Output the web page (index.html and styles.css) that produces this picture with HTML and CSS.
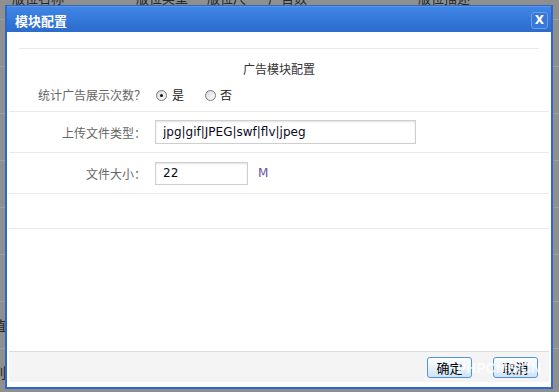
FILE: index.html
```html
<!DOCTYPE html>
<html lang="zh-CN">
<head>
    <meta charset="UTF-8">
    <title>模块配置</title>
    <link rel="stylesheet" href="styles.css">
</head>
<body>
    <div class="page">
        <div class="grid-head">
            <span>版位名称</span>
            <span>版位类型</span>
            <span>版位尺寸</span>
            <span>广告数</span>
            <span>版位描述</span>
        </div>
        <div class="grid-row"></div>
        <div class="grid-row"></div>
        <div class="grid-row"></div>
        <div class="grid-row"></div>
        <div class="grid-row"></div>
        <div class="grid-row"></div>
        <div class="grid-row">值</div>
        <div class="grid-row">列</div>
    </div>

    <div class="dialog">
        <div class="dialog-title">
            <span>模块配置</span>
            <a class="dialog-close">X</a>
        </div>
        <div class="dialog-body">
            <div class="form-panel">
                <div class="form-top">
                    <div class="form-caption">广告模块配置</div>
                    <div class="form-row-inline">
                        <label class="form-label">统计广告展示次数？</label>
                        <div class="field radios">
                            <span class="radio checked"></span><span class="radio-text">是</span>
                            <span class="radio"></span><span class="radio-text">否</span>
                        </div>
                    </div>
                </div>
                <div class="form-row">
                    <label class="form-label">上传文件类型：</label>
                    <div class="field">
                        <input type="text" class="input-text input-wide" value="jpg|gif|JPEG|swf|flv|jpeg">
                    </div>
                </div>
                <div class="form-row">
                    <label class="form-label">文件大小：</label>
                    <div class="field">
                        <input type="text" class="input-text input-small" value="22">
                        <span class="unit">M</span>
                    </div>
                </div>
                <div class="form-row form-row-empty"></div>
            </div>
            <div class="dialog-footer">
                <button type="button" class="btn">确定</button>
                <button type="button" class="btn">取消</button>
            </div>
        </div>
        <div class="watermark">PHPCMS.CN</div>
    </div>
</body>
</html>
```

FILE: styles.css
```css
body {
    margin: 0;
    background-color: #8f8f8f;
    font-family: "Noto Sans CJK SC", "DejaVu Sans", sans-serif;
    font-size: 12px;
    overflow: hidden;
    height: 392px;
}

/* page behind the mask */
.page {
    color: #262626;
}

.grid-head {
    display: grid;
    grid-template-columns: 124px 71px 61px 150px 1fr;
    height: 28px;
    margin-top: -9px;
    border-bottom: 1px solid #9e9e9e;
    font-size: 13px;
    line-height: 14px;
}

.grid-head span {
    padding-left: 12px;
}

.grid-row {
    height: 46px;
    border-bottom: 1px solid #9e9e9e;
    font-size: 14px;
    line-height: 46px;
    text-indent: -8px;
}

/* dialog */
.dialog {
    position: absolute;
    left: 5px;
    top: 5px;
    width: 544px;
    height: 380px;
    border: 2px solid #2e67c6;
    background-color: #fff;
    display: flex;
    flex-direction: column;
}

.dialog-title {
    height: 24px;
    margin-top: -1px;
    padding: 1px 3px 0 8px;
    background: linear-gradient(#3f86e6, #2b6bcd);
    border-top: 1px solid #5a95e8;
    display: flex;
    align-items: center;
    justify-content: space-between;
    color: #fff;
    font-size: 13px;
    font-weight: 700;
}

.dialog-close {
    width: 15px;
    height: 15px;
    border: 1px solid #6c9de8;
    border-radius: 3px;
    background-color: #3a78d8;
    color: #fff;
    font-family: "DejaVu Sans", sans-serif;
    font-size: 12px;
    font-weight: 700;
    line-height: 15px;
    text-align: center;
}

.dialog-body {
    flex: 1;
    padding: 16px 2px 5px;
    display: flex;
    flex-direction: column;
}

.form-panel {
    flex: 1;
}

.form-top {
    border-bottom: 1px solid #e9e9e9;
}

.form-caption {
    margin: 0 10px;
    padding-top: 12px;
    border-top: 1px solid #e9e9e9;
    line-height: 16px;
    text-align: center;
    color: #333;
}

.form-row-inline {
    display: flex;
    padding: 10px 0 8px;
    line-height: 16px;
}

.form-row {
    display: flex;
    align-items: center;
    height: 40px;
    border-bottom: 1px solid #e9e9e9;
}

.form-row-empty {
    height: 34px;
}

.form-label {
    width: 137px;
    text-align: right;
    color: #666;
}

.field {
    margin-left: 9px;
    display: flex;
    align-items: center;
}

.radios {
    padding-left: 1px;
}

.radio {
    width: 9px;
    height: 9px;
    border: 1px solid #7a7a7a;
    border-radius: 50%;
    background: linear-gradient(135deg, #d8d8d8, #fff);
    display: flex;
    align-items: center;
    justify-content: center;
}

.radio.checked::after {
    content: "";
    width: 3px;
    height: 3px;
    border-radius: 50%;
    background-color: #111;
}

.radio-text {
    margin-left: 5px;
    margin-right: 21px;
    color: #222;
}

.radios .radio-text:last-child {
    margin-left: 4px;
}

.input-text {
    box-sizing: border-box;
    margin: 0;
    padding: 0 7px;
    border: 1px solid #cfcfcf;
    box-shadow: inset 0 1px 2px rgba(0, 0, 0, 0.12);
    font-family: "DejaVu Sans", sans-serif;
    font-size: 12px;
    color: #0a0a1e;
    outline: none;
}

.input-wide {
    width: 261px;
    height: 24px;
}

.input-small {
    width: 93px;
    height: 23px;
}

.unit {
    margin-left: 10px;
    margin-top: -1px;
    font-family: "DejaVu Sans", sans-serif;
    font-size: 12px;
    color: #6e4fa6;
}

.dialog-footer {
    height: 30px;
    border-top: 1px solid #dcdcdc;
    background-color: #f4f4f4;
    display: flex;
    align-items: center;
    justify-content: flex-end;
    gap: 21px;
    padding-right: 11px;
}

.btn {
    width: 45px;
    height: 21px;
    padding: 0;
    border: 1px solid #4e95da;
    border-radius: 3px;
    background: linear-gradient(#ffffff, #eaf3fc 45%, #cfe3f6);
    font-family: "Noto Sans CJK SC", sans-serif;
    font-size: 13px;
    line-height: 19px;
    color: #000;
}

.watermark {
    position: absolute;
    left: 450px;
    top: 353px;
    font-family: "Liberation Sans", sans-serif;
    font-size: 14px;
    font-weight: 700;
    line-height: 16px;
    color: rgba(255, 255, 255, 0.75);
}
```
